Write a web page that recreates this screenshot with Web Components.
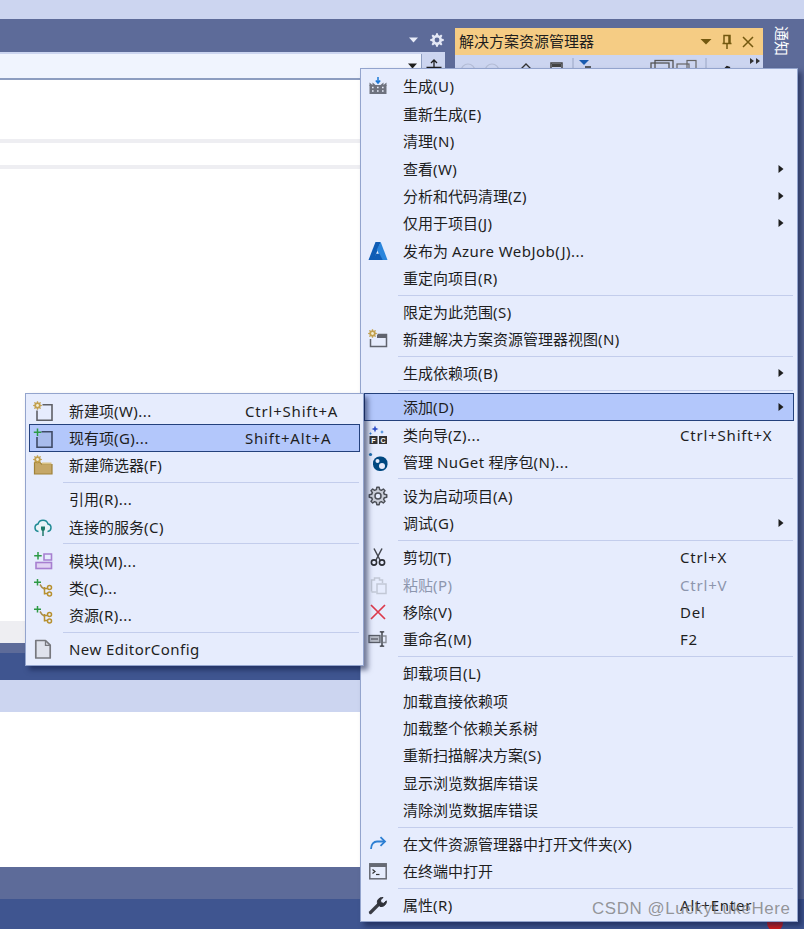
<!DOCTYPE html>
<html><head><meta charset="utf-8">
<style>html,body{margin:0;padding:0;background:#5d6b99;overflow:hidden}</style>
</head><body>
<vs-shell>
  <vs-menu style="left:360px;top:68px;width:438px;height:854px" pad="3.7" icol="39" lw="277">
    <vs-item icon="build">生成(U)</vs-item>
    <vs-item>重新生成(E)</vs-item>
    <vs-item>清理(N)</vs-item>
    <vs-item arrow>查看(W)</vs-item>
    <vs-item arrow>分析和代码清理(Z)</vs-item>
    <vs-item arrow>仅用于项目(J)</vs-item>
    <vs-item icon="azure">发布为 Azure WebJob(J)...</vs-item>
    <vs-item>重定向项目(R)</vs-item>
    <vs-sep></vs-sep>
    <vs-item>限定为此范围(S)</vs-item>
    <vs-item icon="newview">新建解决方案资源管理器视图(N)</vs-item>
    <vs-sep></vs-sep>
    <vs-item arrow>生成依赖项(B)</vs-item>
    <vs-sep></vs-sep>
    <vs-item arrow hot>添加(D)</vs-item>
    <vs-item icon="wizard" shortcut="Ctrl+Shift+X">类向导(Z)...</vs-item>
    <vs-item icon="nuget">管理 NuGet 程序包(N)...</vs-item>
    <vs-sep></vs-sep>
    <vs-item icon="gear">设为启动项目(A)</vs-item>
    <vs-item arrow>调试(G)</vs-item>
    <vs-sep></vs-sep>
    <vs-item icon="cut" shortcut="Ctrl+X">剪切(T)</vs-item>
    <vs-item icon="paste" shortcut="Ctrl+V" disabled>粘贴(P)</vs-item>
    <vs-item icon="remove" shortcut="Del">移除(V)</vs-item>
    <vs-item icon="rename" shortcut="F2">重命名(M)</vs-item>
    <vs-sep></vs-sep>
    <vs-item>卸载项目(L)</vs-item>
    <vs-item>加载直接依赖项</vs-item>
    <vs-item>加载整个依赖关系树</vs-item>
    <vs-item>重新扫描解决方案(S)</vs-item>
    <vs-item>显示浏览数据库错误</vs-item>
    <vs-item>清除浏览数据库错误</vs-item>
    <vs-sep></vs-sep>
    <vs-item icon="open">在文件资源管理器中打开文件夹(X)</vs-item>
    <vs-item icon="terminal">在终端中打开</vs-item>
    <vs-sep></vs-sep>
    <vs-item icon="wrench" shortcut="Alt+Enter">属性(R)</vs-item>
  </vs-menu>
  <vs-menu style="left:25px;top:393px;width:339px;height:273px" pad="3" icol="40" lw="176">
    <vs-item icon="newitem" shortcut="Ctrl+Shift+A">新建项(W)...</vs-item>
    <vs-item icon="existing" shortcut="Shift+Alt+A" hot>现有项(G)...</vs-item>
    <vs-item icon="newfilter">新建筛选器(F)</vs-item>
    <vs-sep></vs-sep>
    <vs-item>引用(R)...</vs-item>
    <vs-item icon="service">连接的服务(C)</vs-item>
    <vs-sep></vs-sep>
    <vs-item icon="module">模块(M)...</vs-item>
    <vs-item icon="classadd">类(C)...</vs-item>
    <vs-item icon="classadd">资源(R)...</vs-item>
    <vs-sep></vs-sep>
    <vs-item icon="doc">New EditorConfig</vs-item>
  </vs-menu>
</vs-shell>
<script>
function gearPts(x,y,ro,ri,n){
  const p=[];const st=Math.PI*2/n;
  for(let k=0;k<n;k++){
    const a=k*st;
    [[-.32,ri],[-.17,ro],[.17,ro],[.32,ri]].forEach(([f,r])=>{
      p.push((x+r*Math.cos(a+f*st)).toFixed(2)+','+(y+r*Math.sin(a+f*st)).toFixed(2));
    });
  }
  return p.join(' ');
}
function gold(x,y){return `<polygon points="${gearPts(x,y,4.4,3.2,8)}" fill="#c2a04f"/><circle cx="${x}" cy="${y}" r="1.400" fill="#f3ecd2"/>`}
const ICONS={
build:`<rect x="1.500" y="9" width="17" height="9" fill="#6e727e"/><path d="M1.500 10V6.500l3 2.500V6.500l3 2.500h5l3-2.500V9l3-2.500V10z" fill="#6e727e"/><path d="M10 1v5.500M7.800 4.500L10 7l2.200-2.500" stroke="#1b78d6" stroke-width="1.500" fill="none"/><path d="M4 11.500h2M9 11.500h2M14 11.500h2M4 15h2M9 15h2M14 15h2" stroke="#e8ecfa" stroke-width="1.600" stroke-dasharray="1.600 1"/>`,
azure:`<path d="M7.500 1h5.200L5.800 19H0.500z" fill="#0f5cb5"/><path d="M12.700 1L19.500 19h-5.700L8.800 8.500z" fill="#2a85dc"/><path d="M8 12.800h3.500l3.200 6.200H4.800z" fill="#0f5cb5"/>`,
newview:`<path d="M9.500 5.500h9v12h-16V10" fill="none" stroke="#60636e" stroke-width="1.500"/><rect x="9" y="6" width="9" height="3" fill="#60636e"/>${gold(4.500,4.500)}`,
wizard:`<path d="M7 0.500l1 2.500 2.500 1-2.500 1-1 2.500-1-2.500-2.500-1 2.500-1z" fill="#2e4fc9"/><path d="M14 5l.6 1.400L16 7l-1.400.6L14 9l-.6-1.400L12 7l1.400-.6z" fill="#2e7dd6"/><path d="M2.500 7l.5 1 1 .5-1 .5-.5 1-.5-1-1-.5 1-.5z" fill="#2e7dd6"/><rect x="1.500" y="11" width="8" height="8" fill="#333"/><rect x="11" y="11" width="8" height="8" fill="#333"/><text x="5.500" y="17.500" font-size="7" font-weight="700" font-family="Liberation Sans" text-anchor="middle" fill="#fff">F</text><text x="15" y="17.500" font-size="7" font-weight="700" font-family="Liberation Sans" text-anchor="middle" fill="#fff">C</text>`,
nuget:`<rect x="5" y="4.500" width="14.500" height="14.500" rx="6.500" fill="#004880"/><circle cx="9.500" cy="9" r="2" fill="#e8ecfb"/><circle cx="14" cy="14" r="3" fill="#e8ecfb"/><circle cx="2.500" cy="2.500" r="1.600" fill="#1f6fb0"/>`,
gear:`<polygon points="${gearPts(10,10,8.800,6.600,8)}" fill="#c9cdd8" stroke="#4c4f57" stroke-width="1.500" stroke-linejoin="round"/><circle cx="10" cy="10" r="3" fill="#e6ecfd" stroke="#4c4f57" stroke-width="1.500"/>`,
cut:`<path d="M6 1.500l6 11.500M14 1.500L8 13" stroke="#43464f" stroke-width="1.500" fill="none"/><circle cx="6" cy="15.500" r="2.600" fill="none" stroke="#2c2e35" stroke-width="1.600"/><circle cx="14" cy="15.500" r="2.600" fill="none" stroke="#2c2e35" stroke-width="1.600"/>`,
paste:`<path d="M3.500 16.500V5h3V3h5v2h3v3" fill="none" stroke="#c2c8d6" stroke-width="1.500"/><rect x="9" y="9" width="9" height="9.500" fill="#e6ecfd" stroke="#c2c8d6" stroke-width="1.500"/><path d="M3.500 17h5" stroke="#c2c8d6" stroke-width="1.500"/>`,
remove:`<path d="M3 3l14 14M17 3L3 17" stroke="#dc3a4c" stroke-width="1.700" fill="none"/>`,
rename:`<rect x="1" y="6.500" width="11" height="7" fill="#b8bcc7" stroke="#5a5e68" stroke-width="1.300"/><path d="M3 10h7" stroke="#5a5e68" stroke-width="1.300"/><path d="M15 7h3v6.500h-3" fill="none" stroke="#8a8e98" stroke-width="1.300"/><path d="M14 3v14M11.800 2.800h4.400M11.800 17.200h4.400" stroke="#2c2e35" stroke-width="1.300" fill="none"/>`,
open:`<path d="M3 15c0-5 3-7.500 6-7.500h7" fill="none" stroke="#2d7fd3" stroke-width="1.800"/><path d="M12.500 3.200L17 7.500l-4.500 4.300" fill="none" stroke="#2d7fd3" stroke-width="1.800"/>`,
terminal:`<rect x="1.800" y="2.800" width="16.400" height="15" fill="#e6ecfd" stroke="#666973" stroke-width="1.500"/><rect x="2" y="3" width="16" height="3" fill="#666973"/><path d="M4.500 8.500l2.500 2-2.500 2" fill="none" stroke="#333" stroke-width="1.200"/><path d="M8 13.500h3.500" stroke="#333" stroke-width="1.200"/>`,
wrench:`<path d="M2.500 17.500l8-8" stroke="#3a3c44" stroke-width="3.200" stroke-linecap="round"/><path d="M10 9.500a5 5 0 0 1 2-6.500a5 5 0 0 1 3-.5l-2.500 2.500 .5 2.800 2.800 .5 2.500-2.500a5 5 0 0 1-6.500 5.500z" fill="#2f3138" stroke="#2f3138" stroke-width="1"/>`,
newitem:`<path d="M9.500 3.800H19v15.400H4V9.500" fill="#e6ecfd" stroke="#5f6066" stroke-width="1.600"/>${gold(4.500,4.500)}`,
existing:`<path d="M8.500 3.800H19v15.400H4V9" fill="#a9bcec" stroke="#3f4a66" stroke-width="1.600"/><path d="M4.500 0.500v7.500M0.800 4.200h7.500" stroke="#2d9a45" stroke-width="1.500"/>`,
newfilter:`<path d="M1.500 7.500h5.500l2 2h10v9.500H1.500z" fill="#c5a768" stroke="#a08238" stroke-width="1.200"/><rect x="9" y="7.500" width="9.500" height="2" fill="#d9c287"/>${gold(4.500,4.500)}`,
service:`<path d="M5.500 14.500a3.800 3.800 0 0 1-.5-7.500a5.200 5.200 0 0 1 10 0a3.800 3.800 0 0 1-.5 7.500" fill="#eaf3f7" stroke="#1f8a94" stroke-width="1.500"/><path d="M8 9.500v2.500a2 2 0 0 0 4 0V9.500z" fill="#1f7a6a"/><path d="M10 13v6" stroke="#1f7a6a" stroke-width="1.500"/>`,
module:`<path d="M11 3h7.500v6H11z" fill="none" stroke="#a77fd0" stroke-width="1.600"/><rect x="3" y="11.500" width="15.500" height="6" fill="#e0d3f3" stroke="#a77fd0" stroke-width="1.600"/><path d="M5 1v7.500M1.200 4.800h7.500" stroke="#2d9a45" stroke-width="1.500"/>`,
classadd:`<path d="M4.500 1v6.500M1 4.200h7" stroke="#2d9a45" stroke-width="1.500"/><path d="M7 6.500l2 3 2.500 1.500" fill="none" stroke="#a98d4c" stroke-width="1.600"/><path d="M11.500 9v7.500" fill="none" stroke="#b7902f" stroke-width="1.500"/><path d="M11.500 10.500h3M11.500 15.500h3" stroke="#b7902f" stroke-width="1.400"/><circle cx="16.500" cy="9.500" r="2" fill="none" stroke="#b7902f" stroke-width="1.500"/><circle cx="16.500" cy="16" r="2" fill="none" stroke="#b7902f" stroke-width="1.500"/>`,
doc:`<path d="M2.800 1.500h9.700l4.700 4.700v12.800H2.800z" fill="#dfe2ec" stroke="#77787e" stroke-width="1.700" stroke-linejoin="round"/><path d="M12.500 1.700v4.700h4.500" fill="none" stroke="#77787e" stroke-width="1.300"/>`
};
class VsShell extends HTMLElement{constructor(){super();this.attachShadow({mode:'open'}).innerHTML=`
<style>
:host{display:flex;flex-direction:column;position:relative;width:804px;height:929px;overflow:hidden;background:#5d6b99;font-family:"Noto Sans","Noto Sans CJK SC",sans-serif;color:#1e1e1e}
.top{height:19px;background:#ccd5f0;flex:none}
.mid{flex:none;height:848px;display:flex}
.left{width:445px;flex:none;display:flex;flex-direction:column}
.head{height:33px;flex:none;display:flex;justify-content:flex-end;align-items:center;gap:9px;padding:8px 0 0 0;box-sizing:border-box}
.combo{height:28px;flex:none;display:flex;border-top:2px solid #ccd5f0;box-sizing:border-box;background:#ccd5f0}
.field{flex:1;background:#f0f4fe;border-right:1px solid #8d9dc0;border-bottom:2px solid #8d9dc0;display:flex;justify-content:flex-end;align-items:center;padding-right:2px}
.btn{width:23px;display:flex;justify-content:center;align-items:flex-start;padding-top:4px;border-bottom:2px solid #8d9dc0;box-sizing:border-box}
.doc{height:541px;flex:none;background:#fff;padding-top:59px;box-sizing:border-box}
.line{height:4px;background:#eeeef2}
.line+.line{margin-top:22px}
.gray{height:22px;background:#eeeef2;flex:none}
.sl{height:10px;background:#5d6b99;flex:none}
.dk{height:27px;background:#3f5590;flex:none}
.lt{height:32px;background:#ccd5f0;flex:none}
.wh{flex:1;background:#fff}
.right{flex:1;display:flex;padding:9px 0 0 10px;gap:12px;min-width:0;box-sizing:border-box;align-items:flex-start}
.panel{width:308px;flex:none;display:flex;flex-direction:column}
.ptitle{height:27px;background:#f5cc84;display:flex;align-items:center;font-size:15px;padding:0 4px;box-sizing:border-box;color:#1e1e1e}
.ptitle span{flex:1;line-height:27px}
.ptitle svg{display:block}
.tools{height:20px;background:#ccd5f0}
.note{writing-mode:vertical-rl;text-orientation:sideways;color:#fff;font-size:15px;line-height:14px;margin-top:-2px;flex:none;width:14px}
.blk{flex:none;width:8px;height:17px;margin:12px 0 0 7px;background:#3f5590}
.bar{height:32px;background:#5d6b99;flex:none}
.bottom{flex:1;background:#3f5590;position:relative}
.dot{position:absolute;left:767px;top:16px;width:16px;height:16px;border-radius:50%;background:#d21c1c}
.mark{position:absolute;left:592px;top:897px;font:16.900px/24px "Liberation Sans",sans-serif;letter-spacing:.6px;color:rgba(125,125,125,.8);white-space:nowrap;z-index:5}
</style>
<div class="top"></div>
<div class="mid">
 <div class="left">
  <div class="head">
   <svg width="12" height="8" viewBox="0 0 12 8"><path d="M1 1.500h9L5.500 6.500z" fill="#e8ecf8"/></svg>
   <svg width="16" height="16" viewBox="0 0 20 20"><polygon points="${gearPts(10,10,8.500,6.300,8)}" fill="#e4e8f5"/><circle cx="10" cy="10" r="3" fill="#5d6b99"/></svg>
  </div>
  <div class="combo">
   <div class="field"><svg width="12" height="8" viewBox="0 0 12 8"><path d="M1 1.500h9L5.500 6.500z" fill="#1e1e1e"/></svg></div>
   <div class="btn"><svg width="18" height="14" viewBox="0 0 18 14"><path d="M9 13V2M6 5l3-3 3 3M1.500 9.500h15" stroke="#1e1e1e" stroke-width="1.300" fill="none"/></svg></div>
  </div>
  <div class="doc"><div class="line"></div><div class="line"></div></div>
  <div class="gray"></div><div class="sl"></div><div class="dk"></div><div class="lt"></div><div class="wh"></div>
 </div>
 <div class="right">
  <div class="panel">
   <div class="ptitle"><span>解决方案资源管理器</span>
    <svg width="14" height="10" viewBox="0 0 14 10" style="margin-right:7px"><path d="M1.500 2h11L7 7.500z" fill="#73580f"/></svg>
    <svg width="14" height="16" viewBox="0 0 14 16" style="margin-right:7px"><path d="M4 1.500h6v8H4zM9 1.500v8M2.500 9.500h9M7 10v5" stroke="#73580f" stroke-width="1.500" fill="none"/></svg>
    <svg width="14" height="14" viewBox="0 0 14 14" style="margin-right:4px"><path d="M2 2l10 10M12 2L2 12" stroke="#73580f" stroke-width="1.500"/></svg>
   </div>
   <div class="tools"><svg width="308" height="20" viewBox="0 0 308 20">
     <circle cx="13" cy="16" r="7" fill="none" stroke="#b4bdd6" stroke-width="1.200"/><circle cx="37" cy="16" r="7" fill="none" stroke="#b4bdd6" stroke-width="1.200"/>
     <path d="M66 14l5-5 5 5" fill="none" stroke="#333" stroke-width="1.300"/>
     <rect x="96" y="8" width="11" height="11" fill="none" stroke="#444" stroke-width="1.500"/><rect x="97" y="9" width="9" height="3" fill="#444"/>
     <path d="M118 3v12" stroke="#9aa6c4"/>
     <path d="M124 5h10l-5 5z" fill="#1a5cb0"/><path d="M130 12h6" stroke="#333" stroke-width="1.500"/>
     <path d="M165 14h5" stroke="#333" stroke-width="1.200"/>
     <rect x="196" y="8" width="18" height="12" fill="none" stroke="#555" stroke-width="1.300"/><rect x="200" y="5.500" width="18" height="12" fill="none" stroke="#555" stroke-width="1.300"/>
     <rect x="222" y="9" width="12" height="10" fill="none" stroke="#666" stroke-width="1.200"/><rect x="232" y="5.500" width="9" height="10" fill="none" stroke="#666" stroke-width="1.200"/>
     <path d="M251 3v15" stroke="#9aa6c4"/>
     <path d="M265 19l7-7 3 1" stroke="#222" stroke-width="2" fill="none"/>
     <path d="M295 3l4 3-4 3zM301 3l4 3-4 3z" fill="#333"/>
   </svg></div>
  </div>
  <div class="note">通知</div>
  <div class="blk"></div>
 </div>
</div>
<div class="bar"></div>
<div class="bottom"><div class="dot"></div></div>
<slot></slot>
<div class="mark">CSDN @LuckyLukeHere</div>`}}
customElements.define('vs-shell',VsShell);
class VsMenu extends HTMLElement{constructor(){super();const r=this.attachShadow({mode:'open'});
 r.innerHTML=`<style>
:host{display:block;position:absolute;box-sizing:border-box;background:#e6ecfd;border:1px solid #93a4cd;padding:var(--pt,4px) 3px 0;box-shadow:4px 4px 5px rgba(15,25,65,.55)}
</style><slot></slot>`}
 connectedCallback(){const a=n=>this.getAttribute(n);this.style.setProperty('--pt',a('pad')+'px');this.style.setProperty('--icol',a('icol')+'px');this.style.setProperty('--lw',a('lw')+'px');}
}
customElements.define('vs-menu',VsMenu);
class VsItem extends HTMLElement{constructor(){super();this.attachShadow({mode:'open'})}
 connectedCallback(){const ic=this.getAttribute('icon'),sc=this.getAttribute('shortcut');
 [...this.childNodes].forEach(n=>{
   if(n.nodeType!==3)return;
   const f=document.createDocumentFragment();
   n.textContent.split(/([\x21-\x7e]+(?: [\x21-\x7e]+)*)/).forEach((t,i)=>{
     if(!t)return;
     if(i%2){const s=document.createElement('span');s.style.letterSpacing='.45px';s.textContent=t;f.append(s)}
     else f.append(t);
   });
   n.replaceWith(f);
 });
 this.shadowRoot.innerHTML=`<style>
:host{display:flex;align-items:center;height:27.400px;font-size:15px;white-space:nowrap;box-sizing:border-box;position:relative;color:#1e1e1e}
:host([hot]){background:#b3c7fb;outline:1px solid #24417c;outline-offset:-1px}
:host([disabled]){color:#8d96ad}
.i{width:28px;flex:none;display:flex;justify-content:center;align-items:center}
.i svg{display:block}
.g{flex:none;width:calc(var(--icol) - 28px)}
.l{flex:none;width:var(--lw);line-height:20px}
.s{flex:1;line-height:20px;letter-spacing:.8px}
.a{flex:none;width:26px;display:flex;justify-content:center}
</style>
<div class="i">${ic?`<svg width="20" height="20" viewBox="0 0 20 20">${ICONS[ic]}</svg>`:''}</div><div class="g"></div>
<div class="l"><slot></slot></div><div class="s">${sc||''}</div>
<div class="a">${this.hasAttribute('arrow')?'<svg width="8" height="10" viewBox="0 0 8 10"><path d="M1.500 1v8L6.500 5z" fill="#1e1e1e"/></svg>':''}</div>`}}
customElements.define('vs-item',VsItem);
class VsSep extends HTMLElement{constructor(){super();this.attachShadow({mode:'open'}).innerHTML=`<style>
:host{display:flex;align-items:center;height:6.500px;padding-left:34px;margin-right:1px}
i{display:block;flex:1;height:1px;background:#c3cdec}
</style><i></i>`}}
customElements.define('vs-sep',VsSep);
</script>
</body></html>
